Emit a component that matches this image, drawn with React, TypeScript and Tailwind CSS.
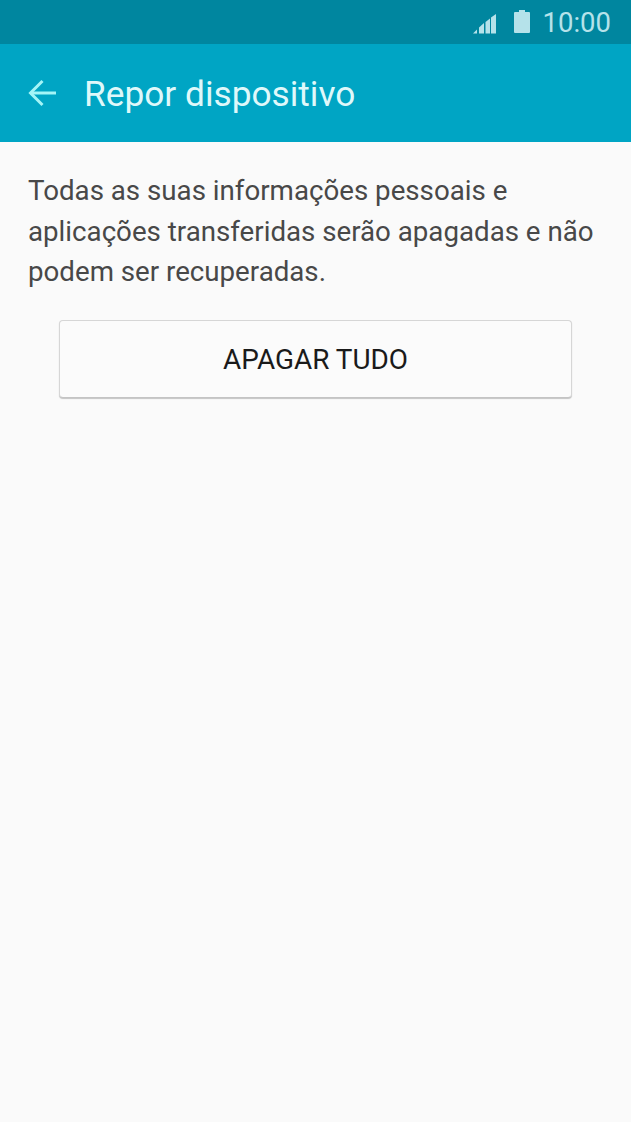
import React from 'react';

const font = { fontFamily: 'Roboto, sans-serif' };

function StatusBar() {
  return (
    <div className="h-[44px] bg-[#00869f] flex items-center justify-end pr-[20px] text-[#b5e2ea]">
      {/* signal */}
      <svg width="23" height="20" viewBox="0 0 23 20" className="mr-[18px] mt-[3px]" fill="#b5e2ea">
        <path d="M0 19.5 L4 15.5 V19.5 Z" />
        <path d="M6 13.5 L11 9 V19.5 H6 Z" />
        <path d="M12.5 8 L17 4.5 V19.5 H12.5 Z" />
        <path d="M18 3.5 L23 0 V19.5 H18 Z" />
      </svg>
      {/* battery */}
      <svg width="16" height="24" viewBox="0 0 16 24" className="mr-[13px] mb-[2px]" fill="#b5e2ea">
        <path d="M5 1 H11 V3 H15 a1 1 0 0 1 1 1 V23 a1 1 0 0 1 -1 1 H1 a1 1 0 0 1 -1 -1 V4 a1 1 0 0 1 1 -1 H5 Z" />
      </svg>
      <span className="text-[27.5px] leading-none mt-[1px] text-[#b5e2ea]">10:00</span>
    </div>
  );
}

function Toolbar() {
  return (
    <div className="h-[98px] bg-[#00a5c4] flex items-center pl-[28px]">
      <svg width="29" height="28" viewBox="0 0 29 28" fill="none" stroke="#a4f5f7" strokeWidth="3" className="mr-[27px]">
        <path d="M28 14 H2.5" />
        <path d="M14.5 2 L2.5 14 L14.5 26" />
      </svg>
      <span className="text-[35.25px] leading-none text-[#dff8fa] mt-[3px]">Repor dispositivo</span>
    </div>
  );
}

export default function App() {
  return (
    <div className="w-[631px] h-[1122px] bg-[#fafafa] overflow-hidden" style={font}>
      <StatusBar />
      <Toolbar />
      <div className="px-[28px] pt-[29px]">
        <p className="text-[27.7px] leading-[40.5px] text-[#484848]">
          Todas as suas informações pessoais e aplicações transferidas serão apagadas e não podem ser recuperadas.
        </p>
      </div>
      <div className="px-[59px] pt-[27px]">
        <button className="w-full h-[78px] pt-[2px] rounded-[4px] border border-[#d6d6d6] border-b-[#c4c4c4] bg-[#fbfbfb] shadow-[0_1px_1px_rgba(0,0,0,0.22)] text-[27.9px] text-[#1a1a1a]">
          APAGAR TUDO
        </button>
      </div>
    </div>
  );
}
